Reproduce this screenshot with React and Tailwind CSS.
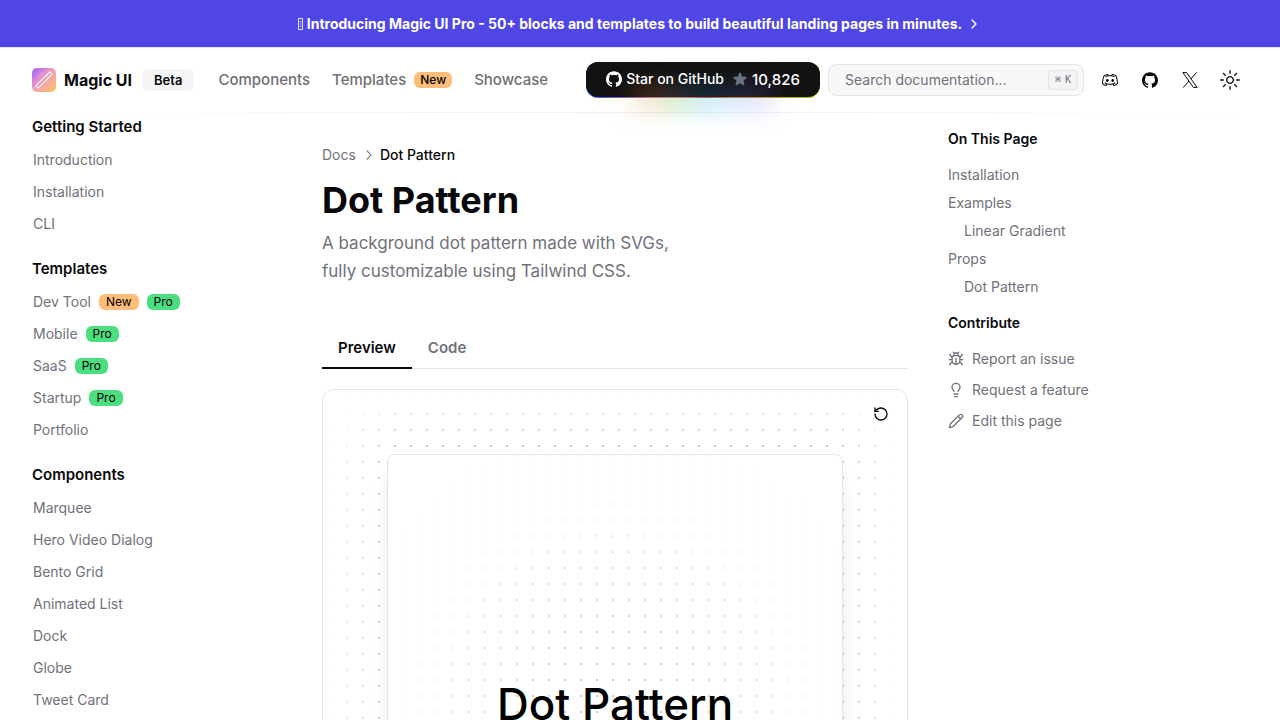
import React from "react";
import { Bug, Lightbulb, Pencil, RotateCcw, ChevronRight } from "lucide-react";
import { RxDiscordLogo, RxSun, RxChevronRight } from "react-icons/rx";
import { BsTwitterX } from "react-icons/bs";
import { SiGithub } from "react-icons/si";

const sections = [
  {
    title: "Getting Started",
    items: [{ name: "Introduction" }, { name: "Installation" }, { name: "CLI" }],
  },
  {
    title: "Templates",
    items: [
      { name: "Dev Tool", tags: ["New", "Pro"] },
      { name: "Mobile", tags: ["Pro"] },
      { name: "SaaS", tags: ["Pro"] },
      { name: "Startup", tags: ["Pro"] },
      { name: "Portfolio" },
    ],
  },
  {
    title: "Components",
    items: [
      { name: "Marquee" },
      { name: "Hero Video Dialog" },
      { name: "Bento Grid" },
      { name: "Animated List" },
      { name: "Dock" },
      { name: "Globe" },
      { name: "Tweet Card" },
    ],
  },
];

function Tag({ label }) {
  const color = label === "New" ? "bg-[#ffbd7a]" : "bg-[#4ade80]";
  return (
    <span className={`rounded-md px-[7px] text-xs leading-4 font-normal text-black ${color}`}>{label}</span>
  );
}

function Logo() {
  return (
    <svg viewBox="0 0 24 24" className="size-6" aria-hidden="true">
      <defs>
        <linearGradient id="logo-bg" x1="0" y1="0" x2="1" y2="1">
          <stop offset="0" stopColor="#9c5cff" />
          <stop offset="0.45" stopColor="#f09cc0" />
          <stop offset="1" stopColor="#ffc45c" />
        </linearGradient>
      </defs>
      <rect width="24" height="24" rx="5" fill="url(#logo-bg)" />
      <g fill="none" stroke="#fff" strokeWidth="1" strokeLinecap="round">
        <rect x="2" y="10.3" width="20" height="3.4" rx="1.2" transform="rotate(-45 12 12)" />
        <path d="M14.6 7l2.4 2.4" strokeOpacity="0.8" />
        <path d="M9.5 4.5v2.5M7 8h1" strokeOpacity="0.35" />
      </g>
    </svg>
  );
}

function Banner() {
  return (
    <a
      href="#pro"
      className="flex h-12 items-center justify-center gap-1 border-b border-indigo-100 bg-[#4f46e5] text-sm font-bold text-white"
    >
      <span className="flex items-center gap-1">
        <svg viewBox="0 0 5 12" className="h-3 w-[5px]" aria-hidden="true">
          <rect x="0.5" y="0.5" width="4" height="11" fill="none" stroke="#fff" strokeOpacity="0.8" />
          <path d="M1.5 3.5h2M1.5 6h2M1.5 8.5h2" stroke="#fff" strokeOpacity="0.7" />
        </svg>
        Introducing Magic UI Pro - 50+ blocks and templates to build beautiful landing pages in minutes.
      </span>
      <ChevronRight className="size-4" />
    </a>
  );
}

function StarButton() {
  return (
    <a
      href="#github"
      className="relative flex h-9 w-[234px] shrink-0 items-center justify-center rounded-xl bg-linear-to-r from-blue-600 via-red-600 to-lime-500 pb-px text-sm font-medium text-white"
    >
      <span className="absolute top-6 left-[20%] h-6 w-3/5 bg-linear-to-r from-orange-400/30 via-sky-300/50 to-violet-400/30 blur-md" />
      <span className="absolute top-6 left-[28%] h-5 w-1/5 bg-lime-300/30 blur-md" />
      <span className="relative flex size-full items-center justify-center overflow-hidden rounded-xl bg-[#121212]">
        <span className="absolute -bottom-2 left-[20%] h-4 w-3/5 bg-linear-to-r from-orange-500/40 via-sky-500/30 to-violet-500/30 blur-md" />
        <span className="relative flex items-center">
          <SiGithub className="size-4" />
          <span className="ml-1">Star on GitHub</span>
          <svg viewBox="0 0 24 24" className="mr-1 ml-2 size-4 fill-gray-500" aria-hidden="true">
            <path d="M10.788 3.21c.448-1.077 1.976-1.077 2.424 0l2.082 5.006 5.404.434c1.164.093 1.636 1.545.749 2.305l-4.117 3.527 1.257 5.273c.271 1.136-.964 2.033-1.96 1.425L12 18.354 7.373 21.18c-.996.608-2.231-.29-1.96-1.425l1.257-5.273-4.117-3.527c-.887-.76-.415-2.212.749-2.305l5.404-.434 2.082-5.005Z" />
          </svg>
          <span className="text-[15px]">10,826</span>
        </span>
      </span>
    </a>
  );
}

function Header() {
  return (
    <header className="relative">
      <div className="flex h-16 items-center px-8">
        <a href="#home" className="mr-6 flex items-center gap-2">
          <Logo />
          <span className="mr-0.5 text-base font-bold whitespace-nowrap">Magic UI</span>
          <span className="rounded-md bg-neutral-100 px-3 py-0.5 text-[13px] leading-[18px] font-semibold">Beta</span>
        </a>
        <nav className="flex items-center gap-[22px] text-[15px] font-medium text-[#6f6f73]">
          <a href="#components">Components</a>
          <a href="#templates" className="flex items-center gap-2">
            Templates
            <span className="rounded-md bg-[#ffbd7a] px-1.5 text-xs leading-4 font-medium text-black">New</span>
          </a>
          <a href="#showcase">Showcase</a>
        </nav>
        <div className="ml-auto flex items-center gap-2">
          <StarButton />
          <button
            type="button"
            className="flex h-8 w-64 items-center justify-between rounded-lg border border-zinc-200 bg-[#f8f8f9] pr-[5px] pl-4 text-sm text-zinc-500"
          >
            Search documentation...
            <kbd className="flex h-5 items-center gap-1 rounded border border-zinc-200 bg-zinc-100 px-1.5 font-['DejaVu_Sans_Mono',monospace] text-[10px] text-zinc-500">
              <span>⌘</span>K
            </kbd>
          </button>
          <nav className="flex items-center gap-1">
            <a href="#discord" aria-label="Discord" className="flex size-9 items-center justify-center">
              <RxDiscordLogo className="size-4" />
            </a>
            <a href="#github" aria-label="GitHub" className="flex size-9 items-center justify-center">
              <SiGithub className="size-4" />
            </a>
            <a href="#x" aria-label="X" className="flex size-9 items-center justify-center">
              <svg viewBox="0 0 16 16" className="size-4" fill="none" stroke="currentColor" aria-hidden="true">
                <path d="M0.9 0.6h3.7l10.5 14.8h-3.7z" />
                <path d="M14.6 0.4L8.9 6.9M7.1 9L1.2 15.6" />
              </svg>
            </a>
            <button type="button" aria-label="Toggle theme" className="flex size-9 items-center justify-center">
              <RxSun className="size-5" />
            </button>
          </nav>
        </div>
      </div>
      <div className="h-px bg-linear-to-r from-transparent via-neutral-200/60 to-transparent" />
    </header>
  );
}

function Sidebar() {
  return (
    <aside className="w-[250px] shrink-0 pl-8">
      {sections.map((s) => (
        <section key={s.title} className="pb-[17px]">
          <h4 className="pt-1 pb-[5px] text-[15px] leading-5 font-semibold">{s.title}</h4>
          <ul className="pl-px text-sm text-[#71717a]">
            {s.items.map((i) => (
              <li key={i.name} className="pt-1">
                <a href="#item" className="flex h-7 items-center gap-2">
                  {i.name}
                  {i.tags?.map((t) => <Tag key={t} label={t} />)}
                </a>
              </li>
            ))}
          </ul>
        </section>
      ))}
    </aside>
  );
}

function Preview() {
  return (
    <div className="relative mt-5 rounded-xl border border-neutral-200 p-16">
      <div className="absolute inset-0 bg-[radial-gradient(#bdbdbd_1px,transparent_1px)] mask-[linear-gradient(to_right,transparent_4px,black_72px,black_calc(100%-72px),transparent_calc(100%-4px)),linear-gradient(to_bottom,transparent,black_64px)] mask-intersect bg-[size:16px_16px]" />
      <button type="button" aria-label="Reload preview" className="absolute top-4 right-[18px]">
        <RotateCcw className="size-4" />
      </button>
      <div className="relative flex h-[500px] items-center justify-center overflow-hidden rounded-lg border border-neutral-200 bg-white shadow-xl">
        <svg className="absolute inset-0 size-full mask-[radial-gradient(300px_circle_at_center,white,transparent)] fill-neutral-400/80" aria-hidden="true">
          <defs>
            <pattern id="dots" width="16" height="16" patternUnits="userSpaceOnUse">
              <circle cx="1" cy="1" r="1" />
            </pattern>
          </defs>
          <rect width="100%" height="100%" fill="url(#dots)" />
        </svg>
        <p className="relative text-[44px] leading-[48px] font-medium whitespace-nowrap text-black">Dot Pattern</p>
      </div>
    </div>
  );
}

function Toc() {
  return (
    <aside className="w-[332px] shrink-0 pt-4 text-sm text-[#71717a]">
      <p className="font-semibold text-zinc-950">On This Page</p>
      <ul className="mt-4 flex flex-col gap-2">
        <li><a href="#installation">Installation</a></li>
        <li><a href="#examples">Examples</a></li>
        <li className="pl-4"><a href="#linear-gradient">Linear Gradient</a></li>
        <li><a href="#props">Props</a></li>
        <li className="pl-4"><a href="#dot-pattern">Dot Pattern</a></li>
      </ul>
      <p className="mt-4 font-semibold text-zinc-950">Contribute</p>
      <ul className="mt-4 flex flex-col gap-[11px]">
        <li><a href="#issue" className="flex items-center gap-2"><Bug className="size-4" />Report an issue</a></li>
        <li><a href="#feature" className="flex items-center gap-2"><Lightbulb className="size-4" />Request a feature</a></li>
        <li><a href="#edit" className="flex items-center gap-2"><Pencil className="size-4" />Edit this page</a></li>
      </ul>
    </aside>
  );
}

export default function App() {
  return (
    <div className="h-screen overflow-hidden bg-white font-['Inter','Liberation_Sans',sans-serif] text-zinc-950">
      <Banner />
      <Header />
      <div className="flex">
        <Sidebar />
        <main className="mr-10 ml-[72px] min-w-0 flex-1 pt-8">
          <nav className="flex items-center gap-1 text-sm text-[#71717a]">
            <a href="#docs">Docs</a>
            <RxChevronRight className="size-4" />
            <span className="font-medium text-zinc-950">Dot Pattern</span>
          </nav>
          <h1 className="mt-[13px] text-4xl leading-[44px] font-bold">Dot Pattern</h1>
          <p className="mt-[7px] max-w-[380px] text-[17px] leading-7 text-[#71717a]">
            A background dot pattern made with SVGs, fully customizable using Tailwind CSS.
          </p>
          <div role="tablist" className="mt-11 flex border-b border-neutral-200 text-[15px] font-semibold">
            <button type="button" role="tab" aria-selected="true" className="-mb-px h-10 border-b-2 border-zinc-950 px-4">
              Preview
            </button>
            <button type="button" role="tab" aria-selected="false" className="-mb-px h-10 border-b-2 border-transparent px-4 text-[#71717a]">
              Code
            </button>
          </div>
          <Preview />
        </main>
        <Toc />
      </div>
    </div>
  );
}
